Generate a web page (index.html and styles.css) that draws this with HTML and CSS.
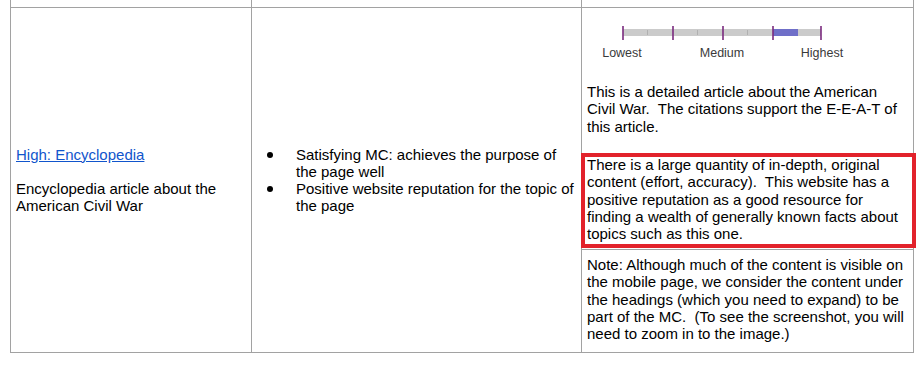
FILE: index.html
```html
<!DOCTYPE html>
<html lang="en">
<head>
<meta charset="utf-8">
<title>Page quality example</title>
<link rel="stylesheet" href="styles.css">
</head>
<body>
<table class="pq">
  <colgroup>
    <col class="w1"><col class="w2"><col class="w3">
  </colgroup>
  <tr class="prev">
    <td></td><td></td><td></td>
  </tr>
  <tr class="main">
    <td class="c1">
      <p><a href="#" class="link">High: Encyclopedia</a></p>
      <p class="blank">&nbsp;</p>
      <p>Encyclopedia article about the American Civil War</p>
    </td>
    <td class="c2">
      <ul class="bullets">
        <li>Satisfying MC: achieves the purpose of the page well</li>
        <li>Positive website reputation for the topic of the page</li>
      </ul>
    </td>
    <td class="c3">
      <div class="sub s1">
        <svg class="rating" width="260" height="45" viewBox="0 0 260 45">
          <rect x="36" y="9" width="198" height="7" fill="#cbcbcb"/>
          <rect x="186" y="9" width="25" height="7" fill="#6f6fc8"/>
          <g stroke="#b0b0b0" stroke-width="1">
            <line x1="60.5" y1="10" x2="60.5" y2="15"/>
            <line x1="110.5" y1="10" x2="110.5" y2="15"/>
            <line x1="160.5" y1="10" x2="160.5" y2="15"/>
          </g>
          <g stroke="#7a2a7e" stroke-width="1.6">
            <line x1="36" y1="6" x2="36" y2="20"/>
            <line x1="86" y1="6" x2="86" y2="20"/>
            <line x1="136" y1="6" x2="136" y2="20"/>
            <line x1="186" y1="6" x2="186" y2="20"/>
            <line x1="234" y1="6" x2="234" y2="20"/>
          </g>
          <g class="lbl" text-anchor="middle">
            <text x="35" y="37">Lowest</text>
            <text x="135" y="37">Medium</text>
            <text x="235" y="37">Highest</text>
          </g>
        </svg>
        <p class="para1">This is a detailed article about the American Civil War.&nbsp; The citations support the E-E-A-T of this article.</p>
      </div>
      <div class="sub s2">
        <p>There is a large quantity of in-depth, original content (effort, accuracy).&nbsp; This website has a positive reputation as a good resource for finding a wealth of generally known facts about topics such as this one.</p>
      </div>
      <div class="sub s3">
        <p>Note: Although much of the content is visible on the mobile page, we consider the content under the headings (which you need to expand) to be part of the MC.&nbsp; (To see the screenshot, you will need to zoom in to the image.)</p>
      </div>
    </td>
  </tr>
</table>
</body>
</html>
```
FILE: styles.css
```css
html, body {
  margin: 0;
  padding: 0;
  background: #ffffff;
}

body {
  font-family: "Liberation Sans", Arial, sans-serif;
  font-size: 15px;
  line-height: 17.25px;
  color: #000000;
}

p {
  margin: 0;
}

.pq {
  border-collapse: collapse;
  table-layout: fixed;
  width: 903px;
  margin-left: 10px;
}

.w1 { width: 241px; }
.w2 { width: 330px; }
.w3 { width: 332px; }

.pq td {
  border: 1px solid #a2a2a2;
  padding: 0;
}

.prev td {
  border-top: none;
  height: 7px;
}

.c1 {
  vertical-align: middle;
  padding: 0 5px !important;
}

.link {
  color: #1155cc;
  text-decoration: underline;
}

.c2 {
  vertical-align: middle;
  padding: 0 5px !important;
}

.bullets {
  list-style: none;
  margin: 0;
  padding: 0 0 0 39px;
}

.bullets li {
  display: flex;
  align-items: flex-start;
}

.bullets li::before {
  content: "";
  flex: 0 0 6px;
  width: 6px;
  height: 6px;
  border-radius: 50%;
  background: #000;
  margin: 6px 23px 0 -29px;
}

.c3 {
  vertical-align: top;
}

.sub {
  padding: 0 5px;
  box-sizing: border-box;
}

.s1 {
  height: 143px;
  padding-top: 12px;
}

.rating {
  display: block;
}

.lbl {
  font-family: "Liberation Sans", Arial, sans-serif;
  font-size: 12.5px;
  fill: #3a3a3a;
}

.para1 {
  margin-top: 18px;
}

.s2 {
  position: relative;
  height: 98px;
  padding-top: 5px;
}

.s2::after {
  content: "";
  position: absolute;
  left: -1px;
  right: -3px;
  top: 2px;
  bottom: 1px;
  border: 4px solid #e2222b;
}

.s3 {
  border-top: 1px solid #a2a2a2;
  padding-top: 6px;
  padding-bottom: 10px;
}
```
